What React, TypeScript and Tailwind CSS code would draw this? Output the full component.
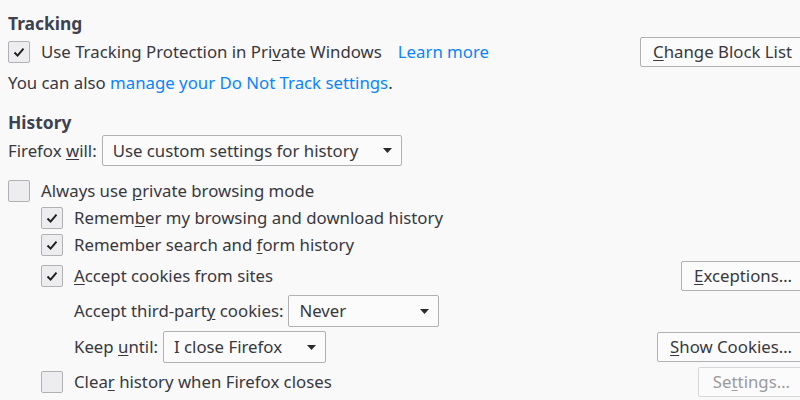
import type { ReactNode } from "react";

function Check({ checked }: { checked?: boolean }) {
  return (
    <div className="flex h-[22px] w-[22px] shrink-0 items-center justify-center rounded-[2px] border border-[#b1b1b3] bg-[#ededf0]">
      {checked ? (
        <svg width="14" height="14" viewBox="0 0 14 14">
          <path d="M2.5 7.5 L5.6 10.6 L11.5 3.6" fill="none" stroke="#1f1f1f" strokeWidth="2" />
        </svg>
      ) : null}
    </div>
  );
}

function CheckRow({ checked, children, className }: { checked?: boolean; children: ReactNode; className: string }) {
  return (
    <div className={"flex items-center gap-[11px] " + className}>
      <Check checked={checked} />
      <span>{children}</span>
    </div>
  );
}

function Select({ value, width }: { value: string; width: string }) {
  return (
    <div className={"flex h-full shrink-0 items-center justify-between rounded-[2px] border border-[#b1b1b3] bg-[#fbfbfb] pl-[10px] pr-[9px] " + width}>
      <span>{value}</span>
      <svg width="9" height="5" viewBox="0 0 9 5">
        <path d="M0 0 H9 L4.5 5 Z" fill="#2a2a2e" />
      </svg>
    </div>
  );
}

function Btn({ children, disabled }: { children: ReactNode; disabled?: boolean }) {
  return (
    <div
      className={
        disabled
          ? "flex h-[30px] items-center rounded-[2px] border border-[#d7d7db] bg-[#fbfbfb] px-[14px] text-[#9a9a9e]"
          : "flex h-[30px] items-center rounded-[2px] border border-[#b1b1b3] bg-[#fbfbfb] px-[12px]"
      }
    >
      {children}
    </div>
  );
}

export default function App() {
  return (
    <div className="h-[400px] w-[800px] overflow-hidden bg-[#f9f9fa] text-[16.8px] text-[#38383d]" style={{ fontFamily: '"Noto Sans", "Open Sans", sans-serif' }}>
      <div className="w-[805px] pl-[8px] pt-[11px]">
        <div className="flex h-[24px] items-center text-[17.4px] font-bold text-[#3d4250]">Tracking</div>

        <div className="flex h-[34px] items-center justify-between">
          <div className="flex items-center">
            <CheckRow checked className="">
              Use Tracking Protection in Pri<u className="underline-offset-2">v</u>ate Windows
            </CheckRow>
            <span className="ml-[16px] text-[#0a84ff]">Learn more</span>
          </div>
          <Btn>
            <u className="underline-offset-2">C</u>hange Block List
          </Btn>
        </div>

        <div className="flex h-[27px] items-center">
          You can also&nbsp;<span className="text-[#0a84ff]">manage your Do Not Track settings</span>.
        </div>

        <div className="mt-[14px] flex h-[24px] items-center text-[17.4px] font-bold text-[#3d4250]">History</div>

        <div className="mt-[1px] flex h-[31px] items-center gap-[5px]">
          <span>
            Firefox <u className="underline-offset-2">w</u>ill:
          </span>
          <Select value="Use custom settings for history" width="w-[300px]" />
        </div>

        <CheckRow className="mt-[14px] h-[22px]">
          Always use <u className="underline-offset-2">p</u>rivate browsing mode
        </CheckRow>

        <div className="pl-[33px]">
          <CheckRow checked className="mt-[5px] h-[22px]">
            Remem<u className="underline-offset-2">b</u>er my browsing and download history
          </CheckRow>
          <CheckRow checked className="mt-[5px] h-[22px]">
            Remember search and <u className="underline-offset-2">f</u>orm history
          </CheckRow>

          <div className="mt-[5px] flex h-[30px] items-center justify-between">
            <CheckRow checked className="">
              <u className="underline-offset-2">A</u>ccept cookies from sites
            </CheckRow>
            <Btn>
              <u className="underline-offset-2">E</u>xceptions…
            </Btn>
          </div>

          <div className="mt-[4px] flex h-[32px] items-center gap-[5px] pl-[33px]">
            <span>
              Accept third-part<u className="underline-offset-2">y</u> cookies:
            </span>
            <Select value="Never" width="w-[151px]" />
          </div>

          <div className="mt-[4px] flex h-[32px] items-center justify-between pl-[33px]">
            <div className="flex h-full items-center gap-[5px]">
              <span>
                Keep <u className="underline-offset-2">u</u>ntil:
              </span>
              <Select value="I close Firefox" width="w-[163px]" />
            </div>
            <Btn>
              <u className="underline-offset-2">S</u>how Cookies…
            </Btn>
          </div>

          <div className="mt-[4px] flex h-[30px] items-center justify-between">
            <CheckRow className="">
              Clea<u className="underline-offset-2">r</u> history when Firefox closes
            </CheckRow>
            <Btn disabled>
              Se<u className="underline-offset-2">t</u>tings…
            </Btn>
          </div>
        </div>
      </div>
    </div>
  );
}
